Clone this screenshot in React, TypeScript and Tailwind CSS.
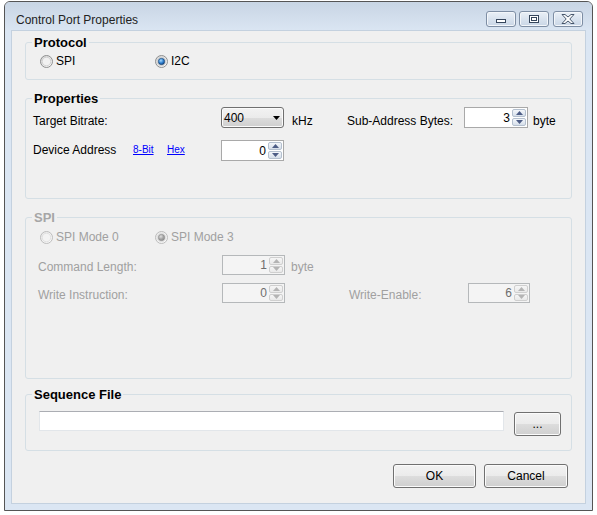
import type { ReactNode } from "react";

// Windows 7 style "Control Port Properties" dialog

function Radio({ checked, disabled, id }: { checked?: boolean; disabled?: boolean; id: string }) {
  const ring = disabled ? "#bcbcbc" : "#8e8f8f";
  return (
    <svg width="13" height="13" viewBox="0 0 13 13" className="shrink-0">
      <defs>
        <linearGradient id={`${id}-bg`} x1="0" y1="0" x2="1" y2="1">
          <stop offset="0" stopColor={disabled ? "#e6e6e6" : "#d2d2d2"} />
          <stop offset="1" stopColor="#ffffff" />
        </linearGradient>
        <radialGradient id={`${id}-dot`} cx="0.4" cy="0.35" r="0.7">
          <stop offset="0" stopColor={disabled ? "#e0e0e0" : "#a8dcff"} />
          <stop offset="0.55" stopColor={disabled ? "#a6a6a6" : "#2f7fcf"} />
          <stop offset="1" stopColor={disabled ? "#8a8a8a" : "#0d3f7c"} />
        </radialGradient>
      </defs>
      <circle cx="6.5" cy="6.5" r="6" fill={`url(#${id}-bg)`} stroke={ring} strokeWidth="1" />
      <circle cx="6.5" cy="6.5" r="4.3" fill={disabled ? "#f3f3f3" : "#f1f1f1"} stroke={disabled ? "#dadada" : "#c9c9c9"} strokeWidth="0.8" />
      {checked && <circle cx="6.5" cy="6.5" r="3.2" fill={`url(#${id}-dot)`} stroke={disabled ? "#8c8c8c" : "#1b3f68"} strokeWidth="0.6" />}
    </svg>
  );
}

function RadioItem({ label, checked, disabled, id, className = "" }: { label: string; checked?: boolean; disabled?: boolean; id: string; className?: string }) {
  return (
    <div className={`flex items-center gap-[3px] ${className}`}>
      <Radio checked={checked} disabled={disabled} id={id} />
      <span className={`text-[12px] leading-[14px] ${disabled ? "text-[#a0a0a0]" : "text-black"}`}>{label}</span>
    </div>
  );
}

function Arrow({ up, color }: { up?: boolean; color: string }) {
  return (
    <svg width="7" height="4" viewBox="0 0 7 4">
      <path d={up ? "M0 4 L3.5 0 L7 4 Z" : "M0 0 L7 0 L3.5 4 Z"} fill={color} />
    </svg>
  );
}

function Spin({ value, className, disabled }: { value: string; className: string; disabled?: boolean }) {
  const arrow = disabled ? "#b4b4b4" : "#4d5d86";
  const btn = disabled
    ? "border-[#cfcfcf] bg-linear-to-b from-[#f6f6f6] to-[#e9e9e9]"
    : "border-[#b4c0cf] bg-linear-to-b from-[#f4f7fb] to-[#d6dfea]";
  return (
    <div
      className={`flex border p-px ${className} ${
        disabled ? "border-[#b5b8ba] bg-[#f4f4f4] text-[#6d6d6d]" : "border-[#a9a9a9] bg-white text-black"
      }`}
    >
      <div className="flex flex-1 items-center justify-end pr-[2px] text-[12px] leading-[14px]">{value}</div>
      <div className="flex w-[14px] flex-col gap-px">
        <div className={`flex flex-1 items-center justify-center rounded-[2px] border ${btn}`}>
          <Arrow up color={arrow} />
        </div>
        <div className={`flex flex-1 items-center justify-center rounded-[2px] border ${btn}`}>
          <Arrow color={arrow} />
        </div>
      </div>
    </div>
  );
}

const btnFace =
  "rounded-[3px] border border-[#707070] bg-[linear-gradient(#f2f2f2_0%,#ebebeb_50%,#dddddd_50%,#cfcfcf_100%)] shadow-[inset_0_0_0_1px_#fbfbfb]";

function Button({ label, className }: { label: string; className: string }) {
  return (
    <button className={`flex items-center justify-center text-[12px] leading-[14px] text-black ${btnFace} ${className}`}>
      {label}
    </button>
  );
}

function Group({ title, disabled, className, children }: { title: string; disabled?: boolean; className: string; children: ReactNode }) {
  return (
    <div className={`mx-[13px] rounded-[3px] border border-[#d5dfe5] ${className}`}>
      <div
        className={`-mt-[8px] ml-[6px] w-fit bg-[#f0f0f0] px-[2px] text-[13px] font-bold leading-[16px] ${
          disabled ? "text-[#a6a6a6]" : "text-black"
        }`}
      >
        {title}
      </div>
      {children}
    </div>
  );
}

function CaptionButton({ children, className = "" }: { children: ReactNode; className?: string }) {
  return (
    <div
      className={`h-[16px] w-[30px] rounded-[3px] border border-[#7e8ea4] bg-linear-to-b from-[#eaf0f7] to-[#c9d6e6] shadow-[inset_0_0_0_1px_#f3f6fa] ${className}`}
    >
      <svg width="28" height="14" viewBox="0 0 28 14">
        {children}
      </svg>
    </div>
  );
}

export default function App() {
  const label = "text-[12px] leading-[14px] text-black";
  const grey = "text-[12px] leading-[14px] text-[#a0a0a0]";

  return (
    <div className="h-[515px] w-[597px] bg-white pl-[4px] pt-[1px] font-['Liberation_Sans',Arial,sans-serif]">
      <div className="flex h-[510px] w-[589px] flex-col rounded-t-[6px] border border-[#555555] bg-[#dbe6f3]">
        {/* Title bar */}
        <div className="flex h-[28px] items-start rounded-t-[5px] bg-linear-to-b from-[#c8d5e4] to-[#dae5f2]">
          <div className="pl-[11px] pt-[11px] text-[12px] leading-[14px] text-[#222222]">Control Port Properties</div>
          <div className="ml-auto mr-[9px] mt-[9px] flex gap-[3px]">
            <CaptionButton>
              <rect x="9.5" y="7.5" width="9" height="3" fill="#ffffff" stroke="#36465c" />
            </CaptionButton>
            <CaptionButton>
              <rect x="9.5" y="3.5" width="9" height="7" fill="#ffffff" stroke="#36465c" />
              <rect x="11.5" y="5.5" width="5" height="3" fill="none" stroke="#36465c" />
            </CaptionButton>
            <CaptionButton className="ml-px">
              <path
                d="M8 2.5 L11 2.5 L14 5 L17 2.5 L20 2.5 L15.8 7 L20 11.5 L17 11.5 L14 9 L11 11.5 L8 11.5 L12.2 7 Z"
                fill="#ffffff"
                stroke="#36465c"
                strokeWidth="0.9"
                strokeLinejoin="round"
              />
            </CaptionButton>
          </div>
        </div>

        {/* Client area */}
        <div className="mx-[6px] mb-[6px] flex flex-1 flex-col border border-[#c4d1df] bg-[#f0f0f0]">
          <Group title="Protocol" className="mt-[11px] h-[38px]">
            <div className="mt-[3px] flex h-[14px] items-center pl-[14px]">
              <RadioItem id="r1" label="SPI" className="w-[115px]" />
              <RadioItem id="r2" label="I2C" checked />
            </div>
          </Group>

          <Group title="Properties" className="mt-[18px] h-[101px]">
            <div className="flex h-[21px] items-start pl-[7px]">
              <div className={`w-[188px] pt-[7px] ${label}`}>Target Bitrate:</div>
              <div className={`flex h-[21px] w-[63px] items-center pl-[2px] pr-[3px] ${btnFace}`}>
                <span className="flex-1 text-[12px] leading-[14px] text-black">400</span>
                <Arrow color="#000000" />
              </div>
              <div className={`w-[63px] pl-[8px] pt-[7px] ${label}`}>kHz</div>
              <div className={`w-[117px] pt-[7px] ${label}`}>Sub-Address Bytes:</div>
              <Spin value="3" className="h-[21px] w-[64px]" />
              <div className={`pl-[5px] pt-[7px] ${label}`}>byte</div>
            </div>
            <div className="mt-[12px] flex h-[21px] items-start pl-[7px]">
              <div className="flex w-[188px]">
                <span className={`w-[100px] pt-[3px] ${label}`}>Device Address</span>
                <a className="w-[34px] pt-[4px] text-[10px] leading-[12px] text-[#0000ff] underline">8-Bit</a>
                <a className="pt-[4px] text-[10px] leading-[12px] text-[#0000ff] underline">Hex</a>
              </div>
              <Spin value="0" className="h-[21px] w-[63px]" />
            </div>
          </Group>

          <Group title="SPI" disabled className="mt-[18px] h-[162px]">
            <div className="mt-[4px] flex h-[14px] items-center pl-[14px]">
              <RadioItem id="r3" label="SPI Mode 0" disabled className="w-[115px]" />
              <RadioItem id="r4" label="SPI Mode 3" disabled checked />
            </div>
            <div className="mt-[11px] flex h-[20px] items-start pl-[12px]">
              <div className={`w-[184px] pt-[5px] ${grey}`}>Command Length:</div>
              <Spin value="1" disabled className="h-[20px] w-[63px]" />
              <div className={`pl-[6px] pt-[5px] ${grey}`}>byte</div>
            </div>
            <div className="mt-[8px] flex h-[20px] items-start pl-[12px]">
              <div className={`w-[184px] pt-[5px] ${grey}`}>Write Instruction:</div>
              <Spin value="0" disabled className="h-[20px] w-[63px]" />
              <div className="w-[64px]" />
              <div className={`w-[119px] pt-[5px] ${grey}`}>Write-Enable:</div>
              <Spin value="6" disabled className="h-[20px] w-[62px]" />
            </div>
          </Group>

          <Group title="Sequence File" className="mt-[15px] h-[57px]">
            <div className="mt-[8px] flex items-start pl-[13px]">
              <div className="h-[20px] w-[465px] border border-[#e2e6ea] border-t-[#abadb3] bg-white" />
              <Button label="..." className="ml-[10px] mt-px h-[24px] w-[47px]" />
            </div>
          </Group>

          <div className="mt-[13px] flex justify-end gap-[8px] pr-[17px]">
            <Button label="OK" className="h-[24px] w-[83px]" />
            <Button label="Cancel" className="h-[24px] w-[84px]" />
          </div>
        </div>
      </div>
    </div>
  );
}
